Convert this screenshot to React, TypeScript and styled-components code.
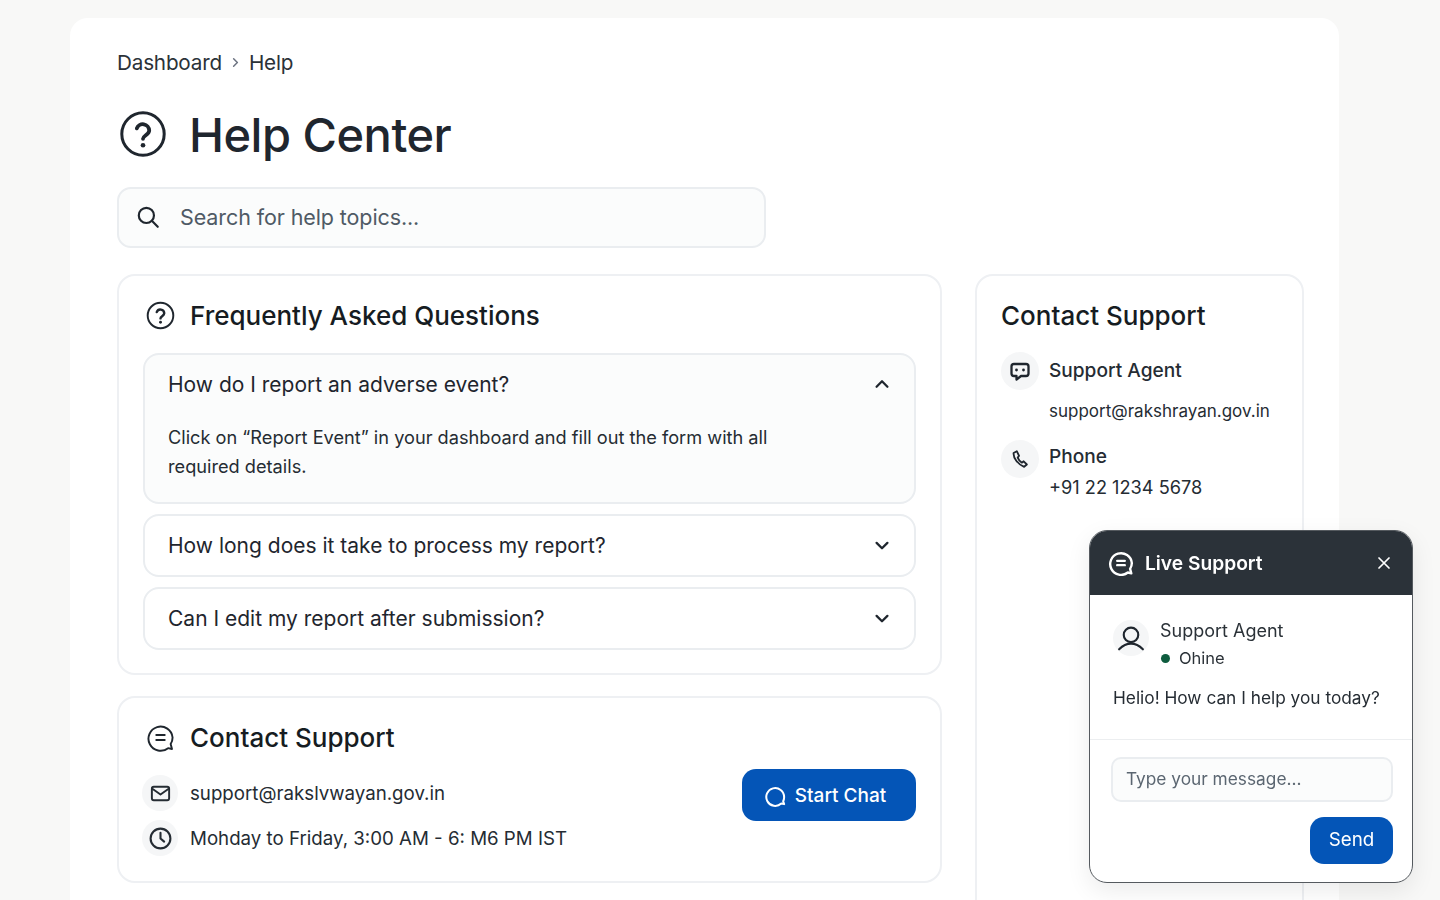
import React from 'react';
import styled, { createGlobalStyle } from 'styled-components';

const GlobalStyle = createGlobalStyle`
  html, body {
    margin: 0;
    height: 900px;
    overflow: hidden;
    background: #f8f8f7;
    font-family: Inter, "Liberation Sans", sans-serif;
    color: #1f262e;
  }
  * { box-sizing: border-box; }
`;

// page shell
const Page = styled.div`
  height: 900px;
  overflow: hidden;
  padding: 18px 101px 0 70px;
`;

const Sheet = styled.main`
  background: #fff;
  border-radius: 18px;
  height: 1000px;
  padding: 31px 35px 0 47px;
`;

const Crumbs = styled.nav`
  display: flex;
  align-items: center;
  gap: 6px;
  height: 26px;
  font-size: 20.7px;
  letter-spacing: -0.2px;
  color: #2b3238;
`;

const TitleRow = styled.div`
  display: flex;
  align-items: center;
  gap: 22px;
  height: 54px;
  margin-top: 32px;
  padding-left: 2px;
`;

const Title = styled.h1`
  margin: 0;
  font-size: 47px;
  font-weight: 500;
  letter-spacing: -0.5px;
  color: #1f262e;
`;

const Search = styled.div`
  display: flex;
  align-items: center;
  gap: 19px;
  width: 649px;
  height: 61px;
  margin-top: 26px;
  padding: 0 0 2px 16px;
  background: #fbfcfc;
  border: 2px solid #eaedf0;
  border-radius: 14px;
  font-size: 21.5px;
  letter-spacing: -0.1px;
  color: #4f5a65;
  svg { color: #1f262e; }
`;

const Columns = styled.div`
  display: grid;
  grid-template-columns: 825px 329px;
  gap: 33px;
  margin-top: 26px;
`;

const Stack = styled.div`
  display: flex;
  flex-direction: column;
  gap: 21px;
`;

const Card = styled.section`
  background: #fff;
  border: 2px solid #eef0f3;
  border-radius: 18px;
  padding: 24px 24px 23px;
`;

const SideCard = styled(Card)`
  height: 700px;
`;

const CardHead = styled.div`
  display: flex;
  align-items: center;
  gap: 15px;
  height: 31px;
  padding-left: 3px;
`;

const CardTitle = styled.h2`
  margin: 0;
  font-size: 26px;
  font-weight: 500;
  color: #161c22;
`;

const FaqList = styled.div`
  display: flex;
  flex-direction: column;
  gap: 10px;
  margin-top: 22px;
`;

const FaqItem = styled.div<{ $open?: boolean }>`
  height: ${(p) => (p.$open ? '151px' : '63px')};
  padding: 0 23px;
  background: ${(p) => (p.$open ? '#fbfcfc' : '#fff')};
  border: 2px solid #eaedf0;
  border-radius: 16px;
`;

const FaqQuestion = styled.div`
  display: flex;
  align-items: center;
  justify-content: space-between;
  height: 59px;
  font-size: 21px;
  color: #1f262e;
  svg { margin: -1px -4px 0 0; }
`;

const FaqAnswer = styled.p`
  margin: 9px 0 0;
  width: 620px;
  font-size: 18.2px;
  line-height: 29px;
  color: #252c33;
`;

const ContactBody = styled.div`
  display: flex;
  align-items: flex-start;
  justify-content: space-between;
  margin-top: 22px;
  margin-bottom: 2px;
`;

const ContactLines = styled.div`
  display: flex;
  flex-direction: column;
  gap: 9px;
  margin-left: -1px;
`;

const ContactLine = styled.div`
  display: flex;
  align-items: center;
  gap: 12px;
  font-size: 18.7px;
  color: #252c33;
`;

const IconDisc = styled.span<{ $size?: number }>`
  display: flex;
  align-items: center;
  justify-content: center;
  flex: none;
  width: ${(p) => p.$size ?? 36}px;
  height: ${(p) => p.$size ?? 36}px;
  border-radius: 50%;
  background: #f5f6f7;
`;

const PrimaryButton = styled.button`
  display: flex;
  align-items: center;
  justify-content: center;
  gap: 8px;
  border: 0;
  border-radius: 14px;
  background: #0455b7;
  color: #fff;
  font-family: inherit;
  font-size: 19px;
  font-weight: 500;
`;

const ChatButton = styled(PrimaryButton)`
  width: 174px;
  height: 52px;
  margin-top: -6px;
  padding: 0 8px 0 0;
`;

const SideBody = styled.div`
  display: grid;
  grid-template-columns: 38px 1fr;
  column-gap: 10px;
  margin-top: 15px;
  &:first-of-type { margin-top: 21px; }
`;

const SideLabel = styled.div<{ $top: number }>`
  font-size: 19.1px;
  font-weight: 500;
  line-height: 30px;
  margin-top: ${(p) => p.$top}px;
  color: #252c33;
`;

const SideValue = styled.div<{ $size: number; $gap: number }>`
  margin-top: ${(p) => p.$gap}px;
  font-size: ${(p) => p.$size}px;
  line-height: 28px;
  color: #252c33;
`;

const Widget = styled.aside`
  position: fixed;
  left: 1089px;
  top: 530px;
  width: 324px;
  height: 353px;
  background: #fff;
  border: 1px solid #555a5f;
  border-radius: 18px;
  overflow: hidden;
  box-shadow: 0 8px 24px rgba(0, 0, 0, 0.08);
`;

const WidgetHead = styled.header`
  display: flex;
  align-items: center;
  height: 64px;
  padding: 0 18px;
  background: #2b3239;
  color: #fff;
  font-size: 19.2px;
  font-weight: 600;
`;

const WidgetTitle = styled.span`
  flex: 1;
  margin-left: 11px;
`;

const AgentRow = styled.div`
  display: flex;
  gap: 11px;
  padding: 25px 23px 0;
`;

const AgentName = styled.div`
  font-size: 18px;
  line-height: 24px;
  margin-top: -1px;
  color: #2b3238;
`;

const AgentStatus = styled.div`
  display: flex;
  align-items: center;
  gap: 9px;
  margin-top: 4px;
  font-size: 16.5px;
  line-height: 22px;
  color: #2b3238;
`;

const Dot = styled.span`
  width: 9px;
  height: 9px;
  margin-left: 1px;
  border-radius: 50%;
  background: #0e5c3e;
`;

const Greeting = styled.p`
  margin: 16px 23px 0;
  font-size: 17.3px;
  line-height: 26px;
  white-space: nowrap;
  color: #252c33;
`;

const Composer = styled.div`
  display: flex;
  flex-direction: column;
  align-items: flex-end;
  gap: 15px;
  margin-top: 28px;
  padding: 17px 19px 0 21px;
  border-top: 1px solid #eceef0;
`;

const MessageBox = styled.div`
  display: flex;
  align-items: center;
  width: 100%;
  height: 45px;
  padding: 0 0 3px 13px;
  background: #fbfcfc;
  border: 2px solid #eaedf0;
  border-radius: 10px;
  font-size: 17.3px;
  color: #5b6671;
`;

const SendButton = styled(PrimaryButton)`
  width: 83px;
  height: 47px;
  padding: 0 0 2px;
  font-size: 18.8px;
  font-weight: 400;
`;

function Icon({ size, stroke = 2, children }: { size: number; stroke?: number; children: React.ReactNode }) {
  return (
    <svg width={size} height={size} viewBox="0 0 24 24" fill="none" stroke="currentColor" strokeWidth={stroke} strokeLinecap="round" strokeLinejoin="round">
      {children}
    </svg>
  );
}

const HelpIcon = ({ size, stroke }: { size: number; stroke: number }) => (
  <Icon size={size} stroke={stroke}>
    <circle cx="12" cy="12" r="10.6" />
    <path d="M8.9 9.2a3.2 3.2 0 0 1 6.2 1c0 2.1-3.1 2.6-3.1 4.2" strokeWidth={stroke + 0.4} />
    <path d="M12 17.6h.01" strokeWidth={stroke + 0.8} />
  </Icon>
);

const Chevron = ({ up }: { up?: boolean }) => (
  <Icon size={26} stroke={2.1}>
    <path d={up ? 'M7 14.500 12 9.500l5 5' : 'M7 10 12 15l5-5'} />
  </Icon>
);

const BubbleIcon = ({ size, stroke }: { size: number; stroke: number }) => (
  <Icon size={size} stroke={stroke}>
    <path d="M21.5 21.5l-3.2-.7A10 10 0 1 1 22 12a9.8 9.8 0 0 1-1.6 5.4z" />
    <path d="M8.500 10h7M8.500 14h7" />
  </Icon>
);

export default function App() {
  return (
    <Page>
      <GlobalStyle />
      <Sheet>
        <Crumbs>
          Dashboard
          <Icon size={15} stroke={2.4}>
            <path d="M9 6l6 6-6 6" stroke="#6b7280" />
          </Icon>
          Help
        </Crumbs>
        <TitleRow>
          <HelpIcon size={48} stroke={1.5} />
          <Title>Help Center</Title>
        </TitleRow>
        <Search>
          <Icon size={26} stroke={2}>
            <circle cx="10.500" cy="10.500" r="7" />
            <path d="M16 16l5 5" />
          </Icon>
          Search for help topics...
        </Search>
        <Columns>
          <Stack>
            <Card>
              <CardHead>
                <HelpIcon size={29} stroke={1.6} />
                <CardTitle>Frequently Asked Questions</CardTitle>
              </CardHead>
              <FaqList>
                <FaqItem $open>
                  <FaqQuestion>
                    How do I report an adverse event?
                    <Chevron up />
                  </FaqQuestion>
                  <FaqAnswer>
                    Click on “Report Event” in your dashboard and fill out the form with all required details.
                  </FaqAnswer>
                </FaqItem>
                <FaqItem>
                  <FaqQuestion>
                    How long does it take to process my report?
                    <Chevron />
                  </FaqQuestion>
                </FaqItem>
                <FaqItem>
                  <FaqQuestion>
                    Can I edit my report after submission?
                    <Chevron />
                  </FaqQuestion>
                </FaqItem>
              </FaqList>
            </Card>
            <Card>
              <CardHead>
                <BubbleIcon size={29} stroke={1.6} />
                <CardTitle>Contact Support</CardTitle>
              </CardHead>
              <ContactBody>
                <ContactLines>
                  <ContactLine>
                    <IconDisc>
                      <Icon size={23} stroke={2}>
                        <rect x="3" y="5" width="18" height="14" rx="2" />
                        <path d="M3.500 7l8.500 6 8.500-6" />
                      </Icon>
                    </IconDisc>
                    support@rakslvwayan.gov.in
                  </ContactLine>
                  <ContactLine>
                    <IconDisc>
                      <Icon size={25} stroke={2}>
                        <circle cx="12" cy="12" r="9.500" />
                        <path d="M12 6.500V12l3.500 3" />
                      </Icon>
                    </IconDisc>
                    Mohday to Friday, 3:00 AM - 6: M6 PM IST
                  </ContactLine>
                </ContactLines>
                <ChatButton>
                  <Icon size={23} stroke={2.1}>
                    <path d="M21 21l-3-.6A9.300 9.300 0 1 1 21 13.500a9 9 0 0 1-1 4.500z" />
                  </Icon>
                  Start Chat
                </ChatButton>
              </ContactBody>
            </Card>
          </Stack>
          <SideCard>
            <CardTitle>Contact Support</CardTitle>
            <SideBody>
              <IconDisc $size={38}>
                <Icon size={24} stroke={2.3}>
                  <path d="M6 5h12a2.500 2.500 0 0 1 2.500 2.500v7A2.500 2.500 0 0 1 18 17h-5l-4.500 3.500V17H6a2.500 2.500 0 0 1-2.500-2.500v-7A2.500 2.500 0 0 1 6 5z" />
                  <path d="M8.500 11h.01M15.500 11h.01" strokeWidth={2.8} />
                </Icon>
              </IconDisc>
              <SideLabel $top={3}>Support Agent</SideLabel>
              <span />
              <SideValue $size={17} $gap={7}>support@rakshrayan.gov.in</SideValue>
            </SideBody>
            <SideBody>
              <IconDisc $size={38}>
                <Icon size={22} stroke={2}>
                  <path d="M8.500 3.500 5 5.500c-.5 5.500 5 12.500 11.500 15l3-2.500-3.500-3.500-2 1.500c-2-1-3.500-3-4.500-5.500L11 8.500z" />
                </Icon>
              </IconDisc>
              <div>
                <SideLabel $top={1}>Phone</SideLabel>
                <SideValue $size={18.2} $gap={2}>+91 22 1234 5678</SideValue>
              </div>
            </SideBody>
          </SideCard>
        </Columns>
      </Sheet>
      <Widget>
        <WidgetHead>
          <BubbleIcon size={26} stroke={2.2} />
          <WidgetTitle>Live Support</WidgetTitle>
          <Icon size={20} stroke={2.1}>
            <path d="M6 6l12 12M18 6 6 18" />
          </Icon>
        </WidgetHead>
        <AgentRow>
          <IconDisc $size={36}>
            <Icon size={30} stroke={1.7}>
              <circle cx="12" cy="9.500" r="5.800" />
              <path d="M2.500 21c3-3 6-4.500 9.500-4.500s6.500 1.500 9.500 4.500" />
            </Icon>
          </IconDisc>
          <div>
            <AgentName>Support Agent</AgentName>
            <AgentStatus>
              <Dot />
              Ohine
            </AgentStatus>
          </div>
        </AgentRow>
        <Greeting>Helio! How can I help you today?</Greeting>
        <Composer>
          <MessageBox>Type your message...</MessageBox>
          <SendButton>Send</SendButton>
        </Composer>
      </Widget>
    </Page>
  );
}
